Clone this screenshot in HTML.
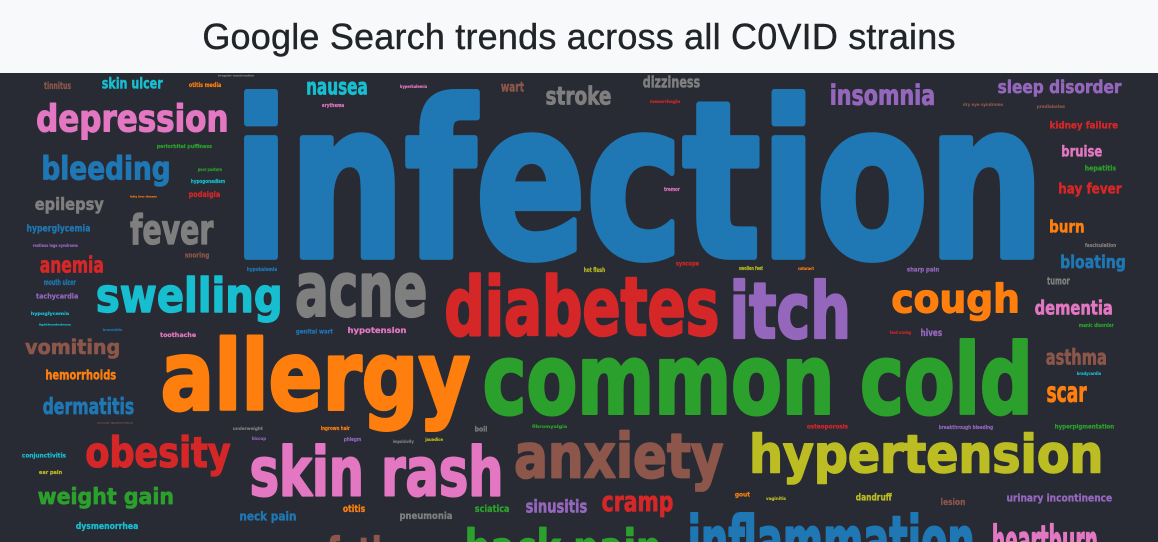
<!DOCTYPE html>
<html><head><meta charset="utf-8">
<style>
html,body{margin:0;padding:0;width:1158px;height:542px;overflow:hidden;background:#282b33}
#hdr{position:absolute;left:0;top:0;width:1158px;height:73px;background:#f8f9fa;overflow:hidden}
#hdr div{position:absolute;left:0;right:0;top:16px;text-align:center;font-family:"Liberation Sans",sans-serif;font-size:36px;color:#212529;letter-spacing:0.2px;-webkit-text-stroke:0.4px #212529}
#wrap{position:absolute;left:0;top:73px;width:1158px;height:469px;overflow:hidden}
svg{position:absolute;left:0;top:0;overflow:hidden}
text{font-family:"Liberation Sans Narrow","DejaVu Sans Condensed","Liberation Sans",sans-serif;font-weight:bold;font-size:100px;stroke-width:3;stroke-linejoin:round}
</style></head><body>
<div id="hdr"><div>Google Search trends across all C0VID strains</div></div>
<div id="wrap">
<svg id="s" width="1158" height="469" viewBox="0 73 1158 469">
<rect x="0" y="73" width="1158" height="469" fill="#282b33"/>
<text fill="#1f77b4" b="243 89 1036 262">infection</text>
<text fill="#e377c2" b="37 103 227 140">depression</text>
<text fill="#1f77b4" b="43 155 169 187">bleeding</text>
<text fill="#8c564b" b="44 81 71 89">tinnitus</text>
<text fill="#17becf" b="102 77 163 89">skin ulcer</text>
<text fill="#ff7f0e" b="189 82 221 87">otitis media</text>
<text fill="#7f7f7f" b="218 74 254 77">irregular menstruation</text>
<text fill="#17becf" b="307 81 367 95">nausea</text>
<text fill="#e377c2" b="400 85 427 89">hyperkalemia</text>
<text fill="#8c564b" b="501 82 524 92">wart</text>
<text fill="#7f7f7f" b="546 85 611 105">stroke</text>
<text fill="#e377c2" b="322 103 344 108">erythema</text>
<text fill="#2ca02c" b="157 144 212 149">periorbital puffiness</text>
<text fill="#2ca02c" b="198 168 222 172">poor posture</text>
<text fill="#17becf" b="191 179 225 184">hypogonadism</text>
<text fill="#d62728" b="189 191 220 199">podalgia</text>
<text fill="#ff7f0e" b="130 195 157 198">fatty liver disease</text>
<text fill="#7f7f7f" b="35 197 104 214">epilepsy</text>
<text fill="#7f7f7f" b="130 212 214 245">fever</text>
<text fill="#1f77b4" b="27 224 90 234">hyperglycemia</text>
<text fill="#9467bd" b="33 244 78 248">restless legs syndrome</text>
<text fill="#d62728" b="40 255 103 273">anemia</text>
<text fill="#8c564b" b="185 252 209 259">snoring</text>
<text fill="#1f77b4" b="247 267 277 272">hypokalemia</text>
<text fill="#1f77b4" b="44 279 76 285">mouth ulcer</text>
<text fill="#9467bd" b="36 293 78 300">tachycardia</text>
<text fill="#17becf" b="97 275 280 323">swelling</text>
<text fill="#7f7f7f" b="296 272 426 318">acne</text>
<text fill="#d62728" b="446 272 718 338">diabetes</text>
<text fill="#7f7f7f" b="643 75 700 88">dizziness</text>
<text fill="#9467bd" b="831 83 934 105">insomnia</text>
<text fill="#9467bd" b="998 79 1122 97">sleep disorder</text>
<text fill="#d62728" b="650 100 680 104">menorrhagia</text>
<text fill="#8c564b" b="963 103 1003 107">dry eye syndrome</text>
<text fill="#8c564b" b="1037 105 1065 109">prediabetes</text>
<text fill="#d62728" b="1050 121 1118 131">kidney failure</text>
<text fill="#e377c2" b="1062 145 1102 157">bruise</text>
<text fill="#2ca02c" b="1085 165 1116 172">hepatitis</text>
<text fill="#d62728" b="1059 183 1122 197">hay fever</text>
<text fill="#e377c2" b="664 187 680 191">tremor</text>
<text fill="#ff7f0e" b="1050 219 1084 233">burn</text>
<text fill="#7f7f7f" b="1085 243 1116 247">fasciculation</text>
<text fill="#1f77b4" b="1061 254 1125 272">bloating</text>
<text fill="#d62728" b="676 262 699 267">syncope</text>
<text fill="#bcbd22" b="584 267 605 272">hot flush</text>
<text fill="#bcbd22" b="739 266 763 270">swollen feet</text>
<text fill="#ff7f0e" b="798 267 814 270">cataract</text>
<text fill="#9467bd" b="907 267 939 273">sharp pain</text>
<text fill="#7f7f7f" b="1047 277 1070 285">tumor</text>
<text fill="#9467bd" b="733 278 848 340">itch</text>
<text fill="#ff7f0e" b="892 282 1018 322">cough</text>
<text fill="#e377c2" b="1035 299 1112 315">dementia</text>
<text fill="#2ca02c" b="1079 323 1114 327">manic disorder</text>
<text fill="#9467bd" b="921 328 942 336">hives</text>
<text fill="#d62728" b="890 331 911 335">food craving</text>
<text fill="#8c564b" b="1046 348 1106 365">asthma</text>
<text fill="#17becf" b="1077 372 1101 376">bradycardia</text>
<text fill="#ff7f0e" b="1047 385 1087 402">scar</text>
<text fill="#17becf" b="31 312 69 316">hypoglycemia</text>
<text fill="#17becf" b="39 323 71 326">lightheadedness</text>
<text fill="#1f77b4" b="103 328 122 331">bronchitis</text>
<text fill="#e377c2" b="160 332 196 337">toothache</text>
<text fill="#1f77b4" b="296 329 333 335">genital wart</text>
<text fill="#e377c2" b="348 327 406 335">hypotension</text>
<text fill="#8c564b" b="25 338 119 359">vomiting</text>
<text fill="#ff7f0e" b="162 335 471 432">allergy</text>
<text fill="#2ca02c" b="484 338 1028 417">common cold</text>
<text fill="#ff7f0e" b="46 369 116 380">hemorrhoids</text>
<text fill="#1f77b4" b="43 397 134 415">dermatitis</text>
<text fill="#8c564b" b="97 422 133 424">sexual dysfunction</text>
<text fill="#7f7f7f" b="233 427 263 431">underweight</text>
<text fill="#ff7f0e" b="321 426 350 431">ingrown hair</text>
<text fill="#7f7f7f" b="475 426 487 432">boil</text>
<text fill="#2ca02c" b="532 425 567 429">fibromyalgia</text>
<text fill="#d62728" b="807 424 848 430">osteoporosis</text>
<text fill="#9467bd" b="939 425 993 430">breakthrough bleeding</text>
<text fill="#2ca02c" b="1055 424 1114 430">hyperpigmentation</text>
<text fill="#d62728" b="86 435 231 477">obesity</text>
<text fill="#9467bd" b="252 437 266 441">hiccup</text>
<text fill="#9467bd" b="344 437 361 442">phlegm</text>
<text fill="#7f7f7f" b="393 440 414 444">impulsivity</text>
<text fill="#bcbd22" b="425 438 443 442">jaundice</text>
<text fill="#17becf" b="22 453 66 459">conjunctivitis</text>
<text fill="#bcbd22" b="39 470 62 475">ear pain</text>
<text fill="#e377c2" b="251 443 501 497">skin rash</text>
<text fill="#8c564b" b="515 430 724 492">anxiety</text>
<text fill="#bcbd22" b="752 432 1101 485">hypertension</text>
<text fill="#2ca02c" b="38 487 173 509">weight gain</text>
<text fill="#ff7f0e" b="343 504 365 512">otitis</text>
<text fill="#1f77b4" b="240 511 296 523">neck pain</text>
<text fill="#7f7f7f" b="400 511 452 521">pneumonia</text>
<text fill="#2ca02c" b="475 504 509 512">sciatica</text>
<text fill="#9467bd" b="526 499 587 513">sinusitis</text>
<text fill="#17becf" b="76 522 138 531">dysmenorrhea</text>
<text fill="#d62728" b="602 495 673 517">cramp</text>
<text fill="#ff7f0e" b="735 492 750 498">gout</text>
<text fill="#bcbd22" b="766 497 786 501">vaginitis</text>
<text fill="#bcbd22" b="856 493 892 501">dandruff</text>
<text fill="#8c564b" b="941 498 965 505">lesion</text>
<text fill="#9467bd" b="1007 493 1112 504">urinary incontinence</text>
<text fill="#8c564b" b="327 535 440 580">fatigue</text>
<text fill="#2ca02c" b="467 527 660 582">back pain</text>
<text fill="#1f77b4" b="690 512 973 566">inflammation</text>
<text fill="#e377c2" b="993 523 1097 558">heartburn</text>
</svg>
</div>
<script>
(function(){
var c=document.createElement('canvas').getContext('2d');
var fam='"Liberation Sans Narrow","DejaVu Sans Condensed","Liberation Sans",sans-serif';
c.font='bold 100px '+fam;
var sw=3;
var ts=document.querySelectorAll('#s text');
for(var i=0;i<ts.length;i++){
 var t=ts[i],b=t.getAttribute('b').split(' ').map(Number);
 t.setAttribute('stroke',t.getAttribute('fill'));
 var m=c.measureText(t.textContent);
 var L=(m.actualBoundingBoxLeft||0)+sw/2,R=(m.actualBoundingBoxRight||m.width)+sw/2;
 var A=(m.actualBoundingBoxAscent||75)+sw/2,D=(m.actualBoundingBoxDescent||0)+sw/2;
 var sx=(b[2]-b[0])/(L+R),sy=(b[3]-b[1])/(A+D);
 var tx=b[0]+L*sx,ty=b[1]+A*sy;
 t.setAttribute('transform','translate('+tx+','+ty+') scale('+sx+','+sy+')');
}
})();
</script>
</body></html>
